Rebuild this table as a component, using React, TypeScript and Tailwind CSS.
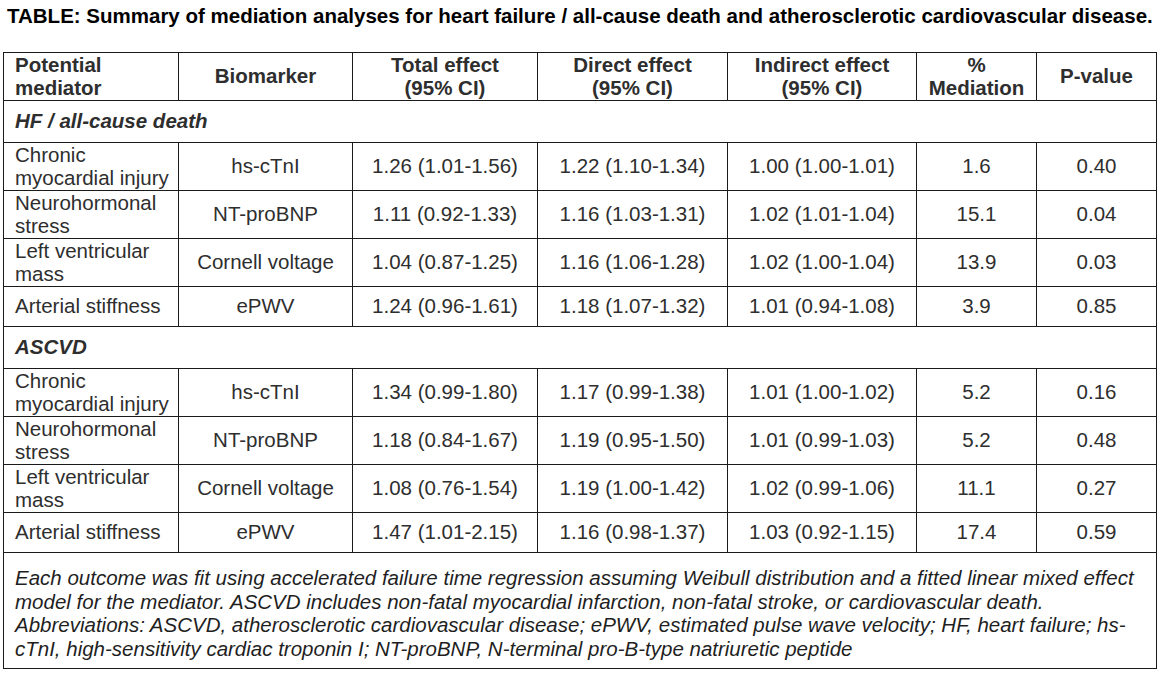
const hf = [
  { med: ['Chronic', 'myocardial injury'], bio: 'hs-cTnI', total: '1.26 (1.01-1.56)', direct: '1.22 (1.10-1.34)', indirect: '1.00 (1.00-1.01)', pct: '1.6', p: '0.40' },
  { med: ['Neurohormonal', 'stress'], bio: 'NT-proBNP', total: '1.11 (0.92-1.33)', direct: '1.16 (1.03-1.31)', indirect: '1.02 (1.01-1.04)', pct: '15.1', p: '0.04' },
  { med: ['Left ventricular', 'mass'], bio: 'Cornell voltage', total: '1.04 (0.87-1.25)', direct: '1.16 (1.06-1.28)', indirect: '1.02 (1.00-1.04)', pct: '13.9', p: '0.03' },
  { med: ['Arterial stiffness'], bio: 'ePWV', total: '1.24 (0.96-1.61)', direct: '1.18 (1.07-1.32)', indirect: '1.01 (0.94-1.08)', pct: '3.9', p: '0.85' },
];

const ascvd = [
  { med: ['Chronic', 'myocardial injury'], bio: 'hs-cTnI', total: '1.34 (0.99-1.80)', direct: '1.17 (0.99-1.38)', indirect: '1.01 (1.00-1.02)', pct: '5.2', p: '0.16' },
  { med: ['Neurohormonal', 'stress'], bio: 'NT-proBNP', total: '1.18 (0.84-1.67)', direct: '1.19 (0.95-1.50)', indirect: '1.01 (0.99-1.03)', pct: '5.2', p: '0.48' },
  { med: ['Left ventricular', 'mass'], bio: 'Cornell voltage', total: '1.08 (0.76-1.54)', direct: '1.19 (1.00-1.42)', indirect: '1.02 (0.99-1.06)', pct: '11.1', p: '0.27' },
  { med: ['Arterial stiffness'], bio: 'ePWV', total: '1.47 (1.01-2.15)', direct: '1.16 (0.98-1.37)', indirect: '1.03 (0.92-1.15)', pct: '17.4', p: '0.59' },
];

type Row = (typeof hf)[number];

const cell = 'border border-[#1a1a1a] p-0 align-middle';

function DataRows({ rows }: { rows: Row[] }) {
  return (
    <>
      {rows.map((r, i) => (
        <tr key={i} className={r.med.length > 1 ? 'h-[48px]' : 'h-[40px]'}>
          <td className={`${cell} pl-[11px] text-left`}>
            {r.med.map((m) => (
              <div key={m}>{m}</div>
            ))}
          </td>
          <td className={`${cell} text-center`}>{r.bio}</td>
          <td className={`${cell} text-center`}>{r.total}</td>
          <td className={`${cell} text-center`}>{r.direct}</td>
          <td className={`${cell} text-center`}>{r.indirect}</td>
          <td className={`${cell} text-center`}>{r.pct}</td>
          <td className={`${cell} text-center`}>{r.p}</td>
        </tr>
      ))}
    </>
  );
}

function Section({ label }: { label: string }) {
  return (
    <tr className="h-[42px]">
      <td colSpan={7} className={`${cell} pl-[11px] text-left font-bold italic`}>
        {label}
      </td>
    </tr>
  );
}

export default function App() {
  return (
    <div className="w-[1162px] h-[677px] bg-white overflow-hidden font-['Liberation_Sans',Arial,sans-serif] text-[20.5px] leading-[22.5px] text-[#2e2e2e]">
      <h1 className="pl-[7px] pt-[5px] font-bold text-black leading-[22px]">
        TABLE: Summary of mediation analyses for heart failure / all-cause death and atherosclerotic cardiovascular disease.
      </h1>

      <table className="ml-[3px] mt-[25px] w-[1153px] border-collapse table-fixed">
        <colgroup>
          <col className="w-[175px]" />
          <col className="w-[174px]" />
          <col className="w-[185px]" />
          <col className="w-[190px]" />
          <col className="w-[189px]" />
          <col className="w-[120px]" />
          <col className="w-[120px]" />
        </colgroup>
        <thead>
          <tr className="h-[48px] font-bold">
            <td className={`${cell} pl-[11px] text-left`}>
              <div>Potential</div>
              <div>mediator</div>
            </td>
            <td className={`${cell} text-center`}>Biomarker</td>
            <td className={`${cell} text-center`}>
              <div>Total effect</div>
              <div>(95% CI)</div>
            </td>
            <td className={`${cell} text-center`}>
              <div>Direct effect</div>
              <div>(95% CI)</div>
            </td>
            <td className={`${cell} text-center`}>
              <div>Indirect effect</div>
              <div>(95% CI)</div>
            </td>
            <td className={`${cell} text-center`}>
              <div>%</div>
              <div>Mediation</div>
            </td>
            <td className={`${cell} text-center`}>P-value</td>
          </tr>
        </thead>
        <tbody>
          <Section label="HF / all-cause death" />
          <DataRows rows={hf} />
          <Section label="ASCVD" />
          <DataRows rows={ascvd} />
          <tr className="h-[116px]">
            <td colSpan={7} className={`${cell} px-[11px] pt-[12px] pb-[7px] italic leading-[23.5px] text-[#1f1f1f]`}>
              Each outcome was fit using accelerated failure time regression assuming Weibull distribution and a fitted linear mixed effect model for the mediator. ASCVD includes non-fatal myocardial infarction, non-fatal stroke, or cardiovascular death. Abbreviations: ASCVD, atherosclerotic cardiovascular disease; ePWV, estimated pulse wave velocity; HF, heart failure; hs-cTnI, high-sensitivity cardiac troponin I; NT-proBNP, N-terminal pro-B-type natriuretic peptide
            </td>
          </tr>
        </tbody>
      </table>
    </div>
  );
}
